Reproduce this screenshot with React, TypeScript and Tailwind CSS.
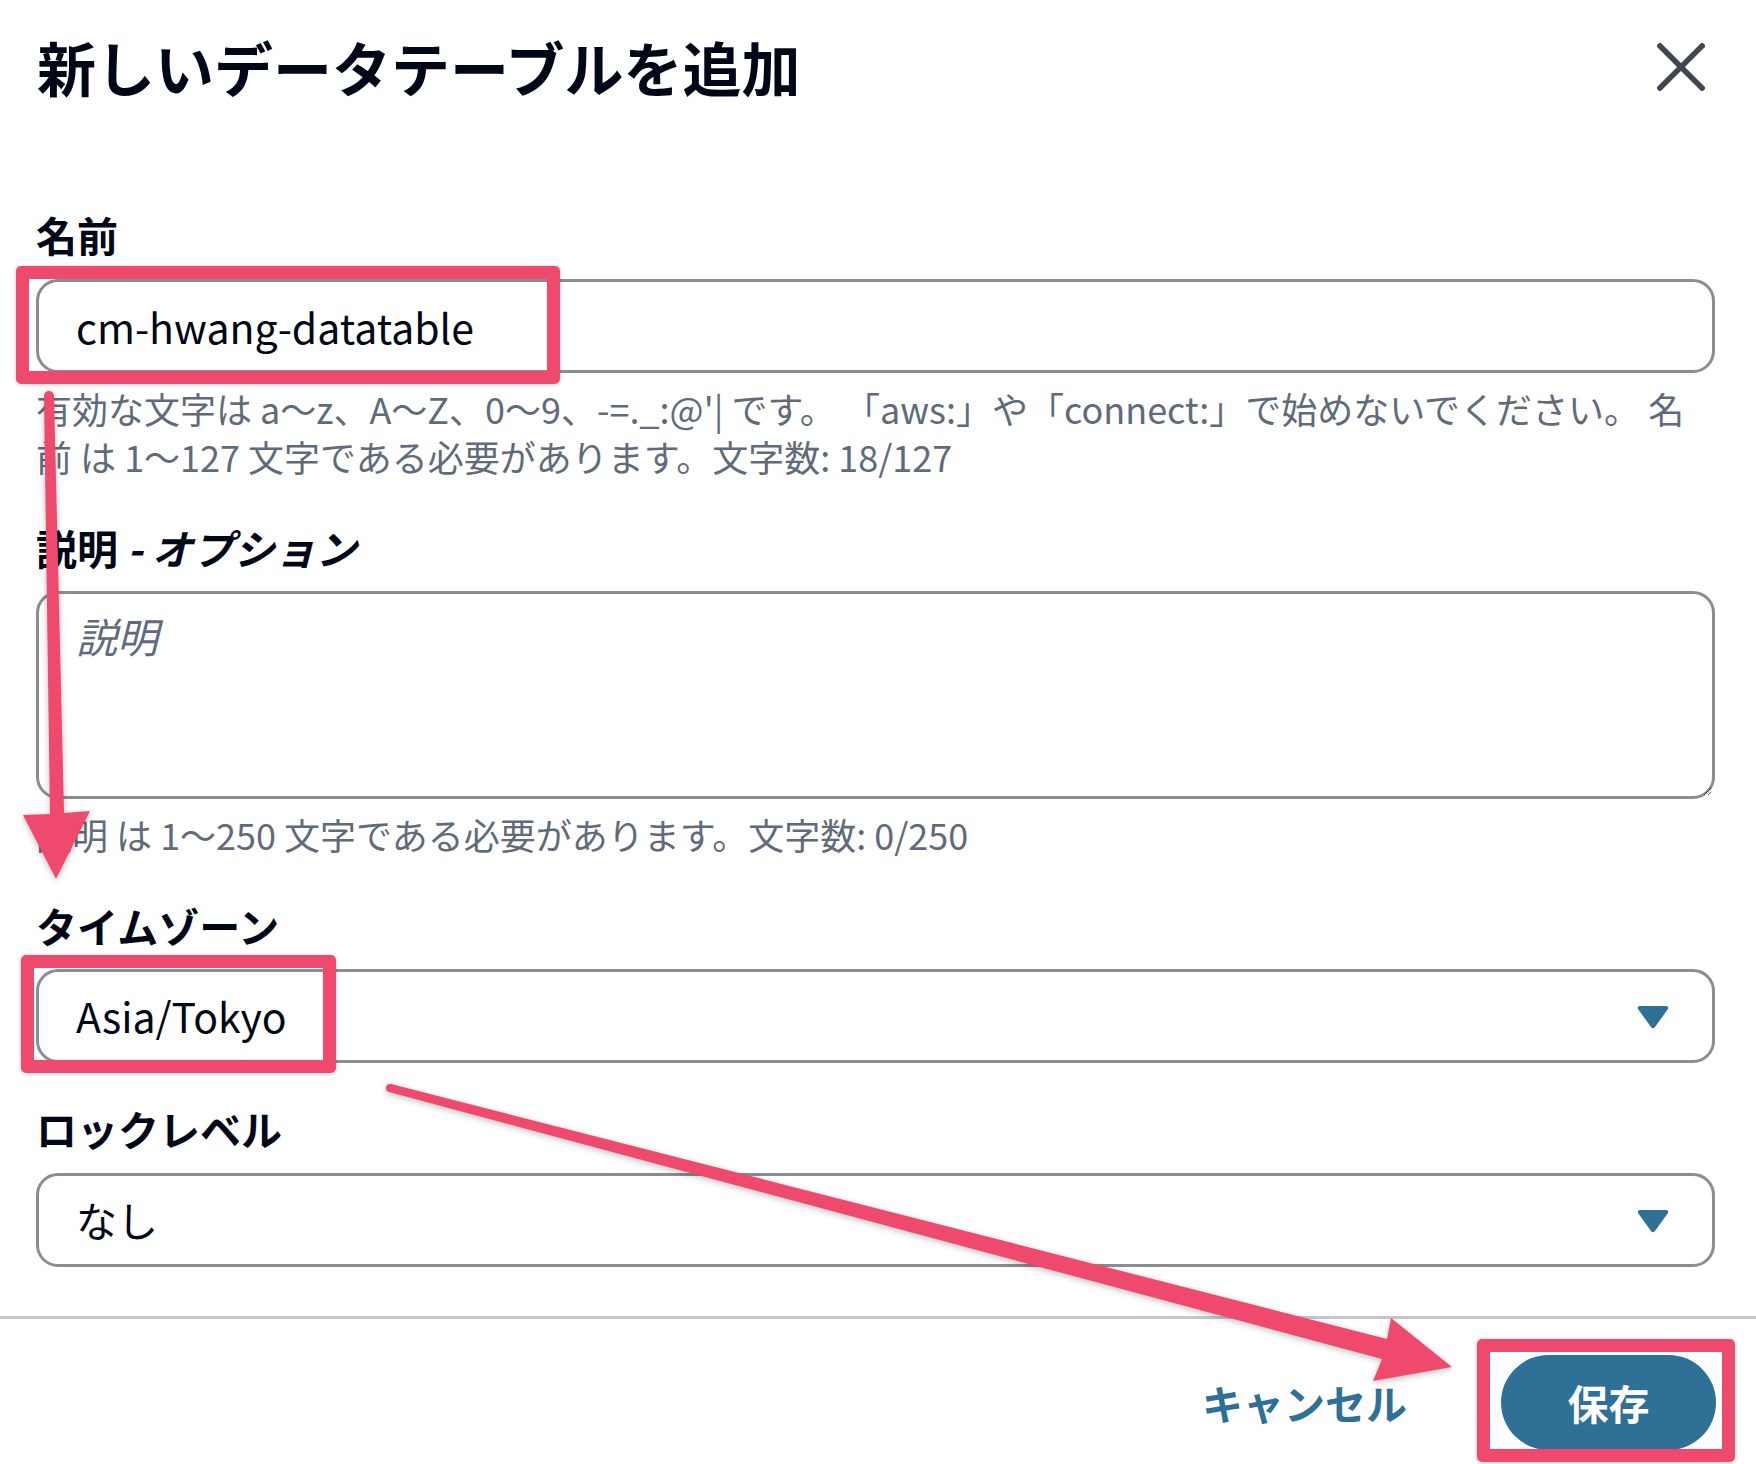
import React from "react";

const font = "font-['Noto_Sans_CJK_JP','Noto_Sans',sans-serif]";

function Caret() {
  return (
    <svg width="32" height="25" viewBox="0 0 32 25" className="shrink-0">
      <path d="M3 2 H29 Q32 2 31 5 L18 23 Q16 25.5 14 23 L1 5 Q0 2 3 2 Z" fill="#2e7096" />
    </svg>
  );
}

function CloseIcon() {
  return (
    <svg width="48" height="48" viewBox="0 0 48 48">
      <path d="M3 3 L45 45 M45 3 L3 45" stroke="#414750" strokeWidth="5.5" strokeLinecap="square" />
    </svg>
  );
}

function Label({ children, className = "" }: { children: React.ReactNode; className?: string }) {
  return (
    <div className={`text-[41px] leading-[48px] font-bold text-[#000716] ${className}`}>{children}</div>
  );
}

function Help({ children, className = "" }: { children: React.ReactNode; className?: string }) {
  return <div className={`text-[36px] leading-[48px] text-[#5f6b7a] ${className}`}>{children}</div>;
}

function Select({ value }: { value: string }) {
  return (
    <div className="flex h-[94px] items-center justify-between rounded-[22px] border-[3px] border-[#8c8c94] bg-white pl-[37px] pr-[43px]">
      <span className="text-[41px] text-[#000716]">{value}</span>
      <Caret />
    </div>
  );
}

export default function App() {
  return (
    <div className={`relative h-[1464px] w-[1756px] overflow-hidden bg-white ${font}`}>
      <div className="flex items-center justify-between pl-[37px] pr-[51px] pt-[31px]">
        <h2 className="text-[59px] leading-[72px] font-bold text-[#000716]">新しいデータテーブルを追加</h2>
        <button className="flex h-[48px] w-[48px] items-center justify-center">
          <CloseIcon />
        </button>
      </div>

      <div className="flex flex-col pl-[36px] pr-[41px]">
        <Label className="mt-[107px]">名前</Label>
        <input
          defaultValue="cm-hwang-datatable"
          className="mt-[21px] h-[94px] rounded-[22px] border-[3px] border-[#8c8c94] pl-[37px] text-[41px] text-[#000716] outline-none"
        />
        <Help className="mt-[11px]">
          <div>有効な文字は a〜z、A〜Z、0〜9、-=._:@'| です。 「aws:」や「connect:」で始めないでください。 名</div>
          <div>前 は 1〜127 文字である必要があります。文字数: 18/127</div>
        </Help>

        <Label className="mt-[43px]">
          説明 <span className="italic">- オプション</span>
        </Label>
        <textarea
          placeholder="説明"
          className="mt-[20px] h-[208px] rounded-[22px] border-[3px] border-[#8c8c94] px-[37px] pt-[17px] text-[41px] leading-[48px] text-[#000716] outline-none placeholder:italic placeholder:text-[#5f6b7a]"
        />
        <Help className="mt-[11px]">説明 は 1〜250 文字である必要があります。文字数: 0/250</Help>

        <Label className="mt-[43px]">タイムゾーン</Label>
        <div className="mt-[20px]">
          <Select value="Asia/Tokyo" />
        </div>

        <Label className="mt-[41px]">ロックレベル</Label>
        <div className="mt-[21px]">
          <Select value="なし" />
        </div>
      </div>

      <div className="mt-[49px] h-[3px] bg-[#c6c6cd]" />

      <div className="mt-[36px] flex items-center justify-end gap-[94px] pr-[40px]">
        <button className="text-[41px] font-bold text-[#2e7096]">キャンセル</button>
        <button className="h-[95px] w-[215px] rounded-full bg-[#2e7096] text-[41px] font-bold text-white">保存</button>
      </div>

      {/* annotations */}
      <div className="absolute left-[16px] top-[266px] h-[118px] w-[544px] rounded-[5px] border-[13px] border-[#ef4a6e] shadow-[0_1px_4px_rgba(0,0,0,0.2)]" />
      <div className="absolute left-[21px] top-[955px] h-[118px] w-[315px] rounded-[5px] border-[13px] border-[#ef4a6e] shadow-[0_1px_4px_rgba(0,0,0,0.2)]" />
      <div className="absolute left-[1477px] top-[1339px] h-[123px] w-[258px] rounded-[5px] border-[13px] border-[#ef4a6e] shadow-[0_1px_4px_rgba(0,0,0,0.2)]" />

      <svg
        className="pointer-events-none absolute left-0 top-0 drop-shadow-[0_2px_3px_rgba(0,0,0,0.25)]"
        width="1756"
        height="1464"
        viewBox="0 0 1756 1464"
      >
        <circle cx="49" cy="396" r="5" fill="#ef4a6e" />
        <polygon points="44,396 54,396 64,813 90,811 56,879 23,815 50,814" fill="#ef4a6e" />
        <circle cx="390" cy="1088" r="4" fill="#ef4a6e" />
        <polygon points="391,1084 1387,1339 1391,1318 1452,1367 1373,1381 1382,1359 389,1092" fill="#ef4a6e" />
      </svg>
    </div>
  );
}
